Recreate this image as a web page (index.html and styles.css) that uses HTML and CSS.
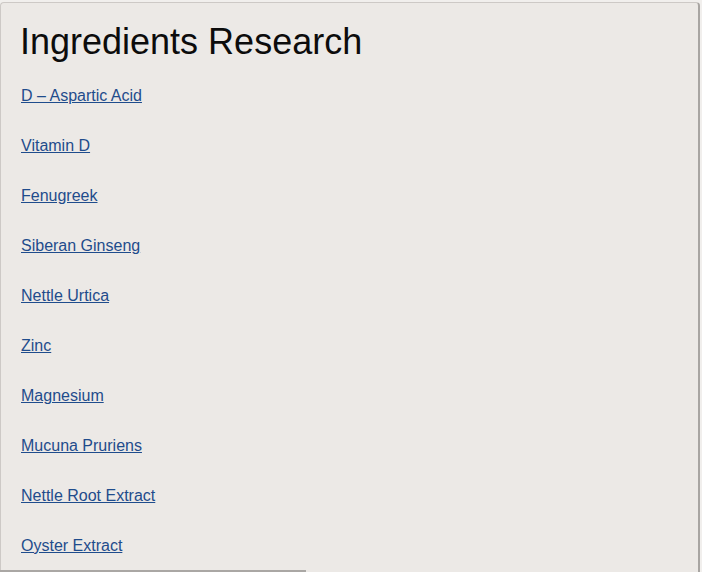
FILE: index.html
```html
<!DOCTYPE html>
<html>
<head>
<meta charset="utf-8">
<link rel="stylesheet" href="styles.css">
</head>
<body>
<div class="panel">
  <h1 class="title">Ingredients Research</h1>
  <ul class="links">
    <li><a href="#">D – Aspartic Acid</a></li>
    <li><a href="#">Vitamin D</a></li>
    <li><a href="#">Fenugreek</a></li>
    <li><a href="#">Siberan Ginseng</a></li>
    <li><a href="#">Nettle Urtica</a></li>
    <li><a href="#">Zinc</a></li>
    <li><a href="#">Magnesium</a></li>
    <li><a href="#">Mucuna Pruriens</a></li>
    <li><a href="#">Nettle Root Extract</a></li>
    <li><a href="#">Oyster Extract</a></li>
  </ul>
  <div class="bottom-line"></div>
</div>
</body>
</html>
```
FILE: styles.css
```css
html, body {
  margin: 0;
  padding: 0;
  height: 100%;
}
body {
  background: #f1efed;
  font-family: "Liberation Sans", Arial, sans-serif;
  overflow: hidden;
}
.panel {
  box-sizing: border-box;
  margin-top: 2px;
  width: 700px;
  height: 570px;
  background: #ece9e6;
  border: 1px solid #cdc9c6;
  border-right: 2px solid #a8a5a2;
  border-bottom: none;
  border-radius: 4px 4px 0 0;
  padding: 0 0 0 20px;
  display: flex;
  flex-direction: column;
}
.title {
  margin: 19px 0 0 0;
  font-size: 36px;
  line-height: 40px;
  font-weight: normal;
  color: #0c0c0c;
  text-indent: -1px;
}
.links {
  list-style: none;
  margin: 24px 0 0 0;
  padding: 0;
  display: flex;
  flex-direction: column;
  gap: 30px;
}
.links li {
  font-size: 16px;
  line-height: 20px;
}
.links a {
  color: #1f4c8c;
  text-decoration: underline;
}
.bottom-line {
  margin-top: auto;
  margin-left: -21px;
  width: 306px;
  height: 2px;
  background: #aaa7a4;
}
```
